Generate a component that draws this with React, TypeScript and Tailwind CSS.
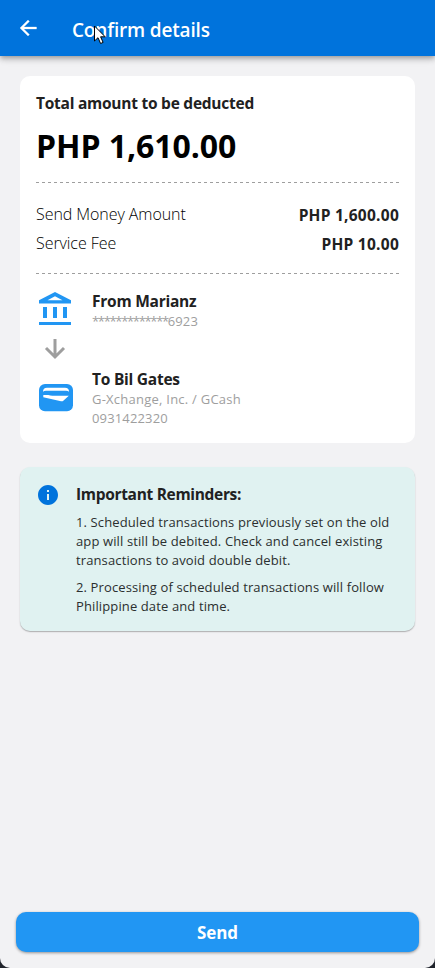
import React from 'react';

function DashedLine() {
  return (
    <div className="h-px w-[363px] bg-[repeating-linear-gradient(90deg,#9e9e9e_0_3px,transparent_3px_6px)]" />
  );
}

function AmountRow({ label, value }: { label: string; value: string }) {
  return (
    <div className="flex h-[29px] items-center justify-between text-[#212121]">
      <span className="whitespace-nowrap pb-px text-[16px] font-light tracking-[-0.07px] text-black">{label}</span>
      <span className="whitespace-nowrap pt-[2px] text-[15.5px] font-bold tracking-[0.25px]">{value}</span>
    </div>
  );
}

export default function App() {
  return (
    <div className="h-[968px] w-[435px] bg-[#20242c]">
      <main className="relative flex h-full flex-col overflow-hidden rounded-b-[10px] bg-[#f2f2f4] font-['Open_Sans','Noto_Sans',sans-serif]">
        <header className="flex h-14 shrink-0 items-center bg-[#0073dc] pl-4 text-white shadow-[0_2px_4px_-1px_rgba(0,0,0,0.2),0_4px_5px_0_rgba(0,0,0,0.14),0_1px_10px_0_rgba(0,0,0,0.12)]">
          <svg className="size-6" viewBox="0 0 24 24" fill="currentColor" stroke="currentColor" strokeWidth="0.3">
            <path d="M20.500 11H7.830l5.590-5.590L12 4l-8 8 8 8 1.410-1.410L7.830 13H20.500v-2z" />
          </svg>
          <h1 className="ml-8 pt-1 text-[19px] font-semibold leading-7 tracking-[-0.17px]">Confirm details</h1>
        </header>

        <section className="mx-5 mt-5 h-[367px] rounded-[10px] bg-white px-4 pt-4">
          <h2 className="h-[23px] whitespace-nowrap text-[15.5px] font-bold leading-[23px] tracking-[-0.25px] text-[#212121]">Total amount to be deducted</h2>
          <p className="h-[67px] whitespace-nowrap pt-[9px] text-[32px] font-bold leading-[44px] tracking-[-0.07px] text-black">PHP 1,610.00</p>
          <DashedLine />
          <div className="h-[90px] pt-[17px]">
            <AmountRow label="Send Money Amount" value="PHP 1,600.00" />
            <AmountRow label="Service Fee" value="PHP 10.00" />
          </div>
          <DashedLine />
          <div className="flex pt-[15px]">
            <div className="flex w-14 flex-col">
              <svg className="h-[40px] w-[38px]" viewBox="0 0 38 40" fill="#2196f3">
                <path fillRule="evenodd" d="M3 11.300 19 3l16 8.300V14.500H3zM11.500 11.200h15L19 7.300z" />
                <path d="M7 18h4v11H7zM17 18h4v11h-4zM27 18h4v11h-4zM3 33h32v3H3z" />
              </svg>
              <svg className="h-[36px] w-[38px]" viewBox="0 0 38 36" fill="none" stroke="#9e9e9e" strokeWidth="3">
                <path d="M19 10v18M10 19l9 9 9-9" />
              </svg>
              <svg className="mt-[18px] h-[30px] w-[38px]" viewBox="0 0 38 30">
                <rect x="3" y="1" width="34" height="27.300" rx="6" fill="#2196f3" />
                <path d="M7 8.800Q7 4.700 11 4.700h18q4 0 4 4.100Q32 7.800 30 7.800H10Q8 7.800 7 8.800z" fill="white" />
                <path d="M7.300 12h5q2 .700 4 .700h16.500l-5.500 5q-1 1-2.300.500L7.300 14.300z" fill="white" />
              </svg>
            </div>
            <div className="whitespace-nowrap text-[#9e9e9e]">
              <h3 className="h-[23px] pt-[1px] text-[15.5px] font-bold leading-[23px] tracking-[-0.24px] text-[#212121]">From Marianz</h3>
              <p className="text-[13px] leading-[19px] tracking-[0.1px]"><span className="tracking-[-1.33px]">*************</span><span>6923</span></p>
              <h3 className="mt-[36px] h-[23px] pt-[1px] text-[15.5px] font-bold leading-[23px] tracking-[-0.24px] text-[#212121]">To Bil Gates</h3>
              <p className="text-[13px] leading-[19px] tracking-[0.24px]">G-Xchange, Inc. / GCash</p>
              <p className="text-[13px] leading-[19px] tracking-[0.15px]">0931422320</p>
            </div>
          </div>
        </section>

        <section className="mx-5 mt-6 flex h-[164px] rounded-[10px] bg-[#e0f2f1] pl-4 pt-4 shadow-[0_1px_1px_0_rgba(0,0,0,0.2),0_1px_2px_0_rgba(0,0,0,0.1)]">
          <svg className="size-6 shrink-0" viewBox="0 0 24 24" fill="#0073dc">
            <path d="M12 2C6.480 2 2 6.480 2 12s4.480 10 10 10 10-4.480 10-10S17.520 2 12 2zm1 15h-2v-6h2v6zm0-8h-2V7h2v2z" />
          </svg>
          <div className="ml-4 whitespace-nowrap text-[13px] leading-[19px] tracking-[0.12px] text-[#2b2f2f]">
            <h2 className="h-[30px] text-[15.5px] font-bold leading-[23px] tracking-[-0.32px] text-[#212121]">Important Reminders:</h2>
            <p>1. Scheduled transactions previously set on the old<br />app will still be debited. Check and cancel existing<br />transactions to avoid double debit.</p>
            <p className="mt-2">2. Processing of scheduled transactions will follow<br />Philippine date and time.</p>
          </div>
        </section>

        <button className="mx-4 mb-4 mt-auto h-10 rounded-[10px] bg-[#2196f3] pt-[2px] text-[17px] font-bold tracking-[-0.1px] text-white shadow-[0_1px_3px_0_rgba(0,0,0,0.4)]">Send</button>

        <svg className="absolute left-[93px] top-[25px] h-[20px] w-[14px]" viewBox="0 0 14 20">
          <path d="M1.500 1v15l3.500-3.300 2.600 5.800 2.500-1.100-2.500-5.600h4.600z" fill="white" stroke="black" />
        </svg>
      </main>
    </div>
  );
}
